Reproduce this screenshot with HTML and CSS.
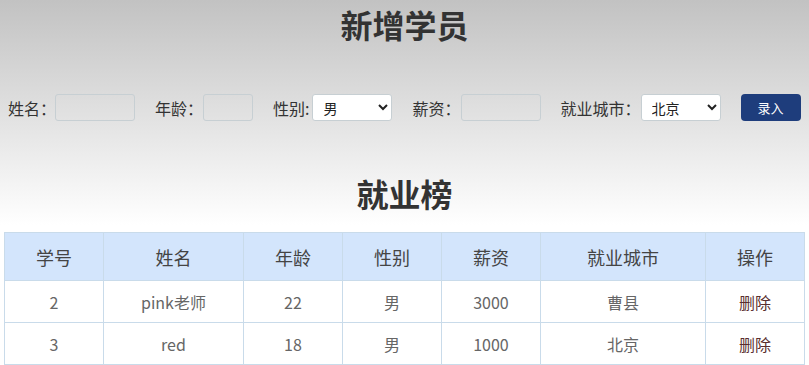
FILE: index.html
```html
<!DOCTYPE html>
<html lang="zh-CN">
<head>
    <meta charset="UTF-8">
    <meta name="viewport" content="width=device-width, initial-scale=1.0">
    <title>学生就业统计表</title>
    <link rel="stylesheet" href="styles.css">
</head>
<body>
    <h1>新增学员</h1>
    <form class="info" autocomplete="off">
        <label>姓名：<input type="text" class="uname"></label>
        <label>年龄：<input type="text" class="age short"></label>
        <label>性别:<select class="gender">
            <option value="男">男</option>
            <option value="女">女</option>
        </select></label>
        <label>薪资：<input type="text" class="salary"></label>
        <label>就业城市：<select class="city">
            <option value="北京">北京</option>
            <option value="上海">上海</option>
            <option value="广州">广州</option>
            <option value="深圳">深圳</option>
            <option value="曹县">曹县</option>
        </select></label>
        <button class="add" type="button">录入</button>
    </form>

    <h1>就业榜</h1>
    <table>
        <thead>
            <tr>
                <th class="c-id">学号</th>
                <th class="c-name">姓名</th>
                <th class="c-age">年龄</th>
                <th class="c-gender">性别</th>
                <th class="c-salary">薪资</th>
                <th class="c-city">就业城市</th>
                <th>操作</th>
            </tr>
        </thead>
        <tbody>
            <tr>
                <td>2</td>
                <td>pink老师</td>
                <td>22</td>
                <td>男</td>
                <td>3000</td>
                <td>曹县</td>
                <td><a href="javascript:;">删除</a></td>
            </tr>
            <tr>
                <td>3</td>
                <td>red</td>
                <td>18</td>
                <td>男</td>
                <td>1000</td>
                <td>北京</td>
                <td><a href="javascript:;">删除</a></td>
            </tr>
        </tbody>
    </table>
</body>
</html>
```

FILE: styles.css
```css
* {
    margin: 0;
    padding: 0;
    box-sizing: border-box;
}

body {
    font-family: "Noto Sans CJK SC", "Microsoft YaHei", sans-serif;
    font-size: 16px;
    color: #333;
    background: linear-gradient(to bottom, #c2c2c2 0, #ffffff 225px, #ffffff 100%) no-repeat;
    min-height: 100vh;
}

h1 {
    text-align: center;
    font-size: 32px;
    line-height: 48px;
    color: #333;
    font-weight: 700;
}

.info {
    display: flex;
    align-items: center;
    gap: 20px;
    height: 27px;
    margin: 46px 0 0 8px;
}

.info label {
    display: flex;
    align-items: center;
    font-size: 16px;
    color: #333;
    white-space: nowrap;
}

.info input {
    width: 80px;
    height: 27px;
    border: 1px solid #c7cfd3;
    border-radius: 3px;
    background: transparent;
    outline: none;
}

.info input.uname {
    margin-left: -1px;
}

.info input.short {
    width: 50px;
}

.info select {
    width: 80px;
    height: 27px;
    padding-left: 6px;
    border: 1px solid #c7cfd3;
    border-radius: 3px;
    background: #fff;
    font-family: inherit;
    font-size: 14px;
    color: #222;
}

.info select.gender {
    margin-left: 3px;
}

.add {
    width: 60px;
    height: 27px;
    border: none;
    border-radius: 4px;
    background: #1e3d7c;
    color: #fff;
    font-family: inherit;
    font-size: 13px;
    cursor: pointer;
}

.info + h1 {
    margin-top: 48px;
}

table {
    width: 801px;
    margin: 15px auto 0;
    border-collapse: collapse;
    text-align: center;
}

th, td {
    border: 1px solid #c9dbea;
}

th {
    height: 48px;
    background: #d3e5fc;
    font-size: 18px;
    font-weight: 400;
    color: #444;
}

td {
    height: 42px;
    background: #fff;
    color: #666;
    font-size: 16px;
}

.c-id, .c-age, .c-gender, .c-salary {
    width: 99px;
}

.c-name {
    width: 140px;
}

.c-city {
    width: 165px;
}

td a {
    color: #5a2e2e;
    text-decoration: none;
}
```
